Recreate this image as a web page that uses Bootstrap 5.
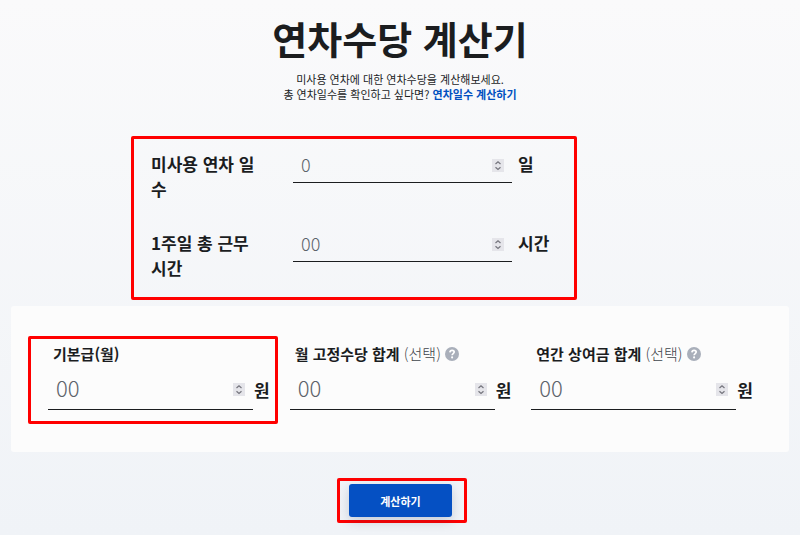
<!DOCTYPE html>
<html lang="ko">
<head>
<meta charset="utf-8">
<meta name="viewport" content="width=device-width, initial-scale=1">
<title>연차수당 계산기</title>
<link href="https://cdn.jsdelivr.net/npm/bootstrap@5.3.0/dist/css/bootstrap.min.css" rel="stylesheet">
<style>
  body {
    font-family: "Noto Sans CJK KR", "Noto Sans", sans-serif;
    color: #1b1d1f;
    background: linear-gradient(#fafafb, #f0f3f7) no-repeat;
  }
  .page-title { font-size: 38px; line-height: 48px; font-weight: 700; padding-top: 14px; }
  .intro { font-size: 11px; line-height: 15px; margin-top: 10px; }
  .intro a { color: #0050c0; font-weight: 700; }
  .marked { border: 3px solid transparent; border-radius: 2px; }
  .marked.on { border-color: #f00; }
  .work-wrap { max-width: 538px; margin-top: 34px; }
  .work-box { max-width: 446px; padding: 12px 20px 17px 17px; }
  .work-row + .work-row { margin-top: 29px; }
  .work-label { width: 118px; margin-right: 24px; font-size: 17px; line-height: 25px; font-weight: 700; }
  .unit { font-size: 17px; line-height: 25px; font-weight: 700; }
  .work-unit { width: 36px; margin-left: 6px; }
  .line-field { border-bottom: 1px solid #1b1d1f; padding: 0 8px; height: 32px; }
  .line-field input {
    appearance: textfield; -moz-appearance: textfield;
    background: transparent; border: 0; outline: 0; padding: 0; min-width: 0;
    font-size: 18px; line-height: 26px; font-weight: 300; color: #1b1d1f;
  }
  .line-field input::-webkit-inner-spin-button { appearance: none; -webkit-appearance: none; margin: 0; }
  .line-field input::placeholder { color: #5c636a; opacity: 1; }
  .stepper { width: 12px; height: 13px; background: #e5e5ea; }
  .pay-card { background: #fcfcfc; border-radius: 3px; margin: 6px 11px 0; padding: 30px 36px 28px 17px; }
  .pay-box { margin-right: -8px; padding: 4px 5px 11px 17px; }
  .pay-label { font-size: 15px; line-height: 22px; font-weight: 700; margin-left: 5px; }
  .pay-label small { font-size: 15px; font-weight: 300; color: #3f454b; }
  .pay-box .line-field { height: 45px; }
  .pay-box .line-field input { font-size: 22px; line-height: 32px; }
  .pay-box .unit { margin-left: 1px; }
  .help { width: 14px; height: 14px; }
  .submit-box { width: 130px; padding: 3px 12px 3px 9px; }
  .submit-wrap { margin: 26px 0 12px; }
  .btn-calc {
    height: 33px; font-size: 11px; line-height: 16px; font-weight: 700; color: #fff;
    background: #0550c3; border: 0; border-radius: 3px; box-shadow: 0 4px 12px rgba(30, 50, 90, .2);
  }
  .btn-calc:hover { background: #0446ab; color: #fff; }
</style>
<script src="https://cdn.jsdelivr.net/npm/bootstrap@5.3.0/dist/js/bootstrap.bundle.min.js"></script>
</head>
<body class="min-vh-100">
<svg class="d-none" aria-hidden="true">
  <symbol id="updown" viewBox="0 0 12 13"><path d="M3.500 5 6 2.700 8.500 5M3.500 8.200 6 10.500 8.500 8.200" fill="none" stroke="#75757d" stroke-width="1.200"/></symbol>
  <symbol id="question" viewBox="0 0 14 14"><circle cx="7" cy="7" r="7" fill="#a9afba"/><path d="M4.900 5.400C5 3.900 6 3.300 7.100 3.300c1.200 0 2.100.7 2.100 1.800 0 1.500-2.100 1.500-2.100 3.200" fill="none" stroke="#fff" stroke-width="1.700"/><circle cx="7.100" cy="10.400" r="1.050" fill="#fff"/></symbol>
</svg>
<main>
  <header class="text-center">
    <h1 class="page-title mb-0">연차수당 계산기</h1>
    <p class="intro mb-0">미사용 연차에 대한 연차수당을 계산해보세요.<br>총 연차일수를 확인하고 싶다면? <a href="#" class="text-decoration-none">연차일수 계산하기</a></p>
  </header>
  <form>
    <div class="work-wrap mx-auto">
      <div class="work-box marked on">
        <div class="work-row d-flex align-items-start">
          <label class="work-label flex-shrink-0" for="days">미사용 연차 일<wbr>수</label>
          <div class="line-field d-flex align-items-start flex-fill">
            <input class="flex-fill w-100" type="number" id="days" placeholder="0">
            <button type="button" class="stepper btn p-0 border-0 rounded-0 d-flex flex-shrink-0 mt-2" aria-label="일수 조절"><svg width="12" height="13"><use href="#updown"/></svg></button>
          </div>
          <span class="unit work-unit flex-shrink-0">일</span>
        </div>
        <div class="work-row d-flex align-items-start">
          <label class="work-label flex-shrink-0" for="hours">1주일 총 근무<br>시간</label>
          <div class="line-field d-flex align-items-start flex-fill">
            <input class="flex-fill w-100" type="number" id="hours" placeholder="00">
            <button type="button" class="stepper btn p-0 border-0 rounded-0 d-flex flex-shrink-0 mt-2" aria-label="시간 조절"><svg width="12" height="13"><use href="#updown"/></svg></button>
          </div>
          <span class="unit work-unit flex-shrink-0 text-nowrap">시간</span>
        </div>
      </div>
    </div>
    <section class="pay-card">
      <div class="row g-0">
        <div class="col-4">
          <div class="pay-box marked on">
            <div class="pay-label"><label for="base">기본급(월)</label></div>
            <div class="d-flex align-items-center">
              <div class="line-field d-flex align-items-center flex-fill">
                <input class="flex-fill w-100" type="number" id="base" placeholder="00">
                <button type="button" class="stepper btn p-0 border-0 rounded-0 d-flex flex-shrink-0 mt-1" aria-label="기본급 조절"><svg width="12" height="13"><use href="#updown"/></svg></button>
              </div>
              <span class="unit pt-1">원</span>
            </div>
          </div>
        </div>
        <div class="col-4">
          <div class="pay-box marked">
            <div class="pay-label d-flex align-items-center"><label for="fixed">월 고정수당 합계 <small>(선택)</small></label>
              <button type="button" class="help btn p-0 border-0 d-flex ms-1" aria-label="고정수당 도움말"><svg width="14" height="14"><use href="#question"/></svg></button></div>
            <div class="d-flex align-items-center">
              <div class="line-field d-flex align-items-center flex-fill">
                <input class="flex-fill w-100" type="number" id="fixed" placeholder="00">
                <button type="button" class="stepper btn p-0 border-0 rounded-0 d-flex flex-shrink-0 mt-1" aria-label="고정수당 조절"><svg width="12" height="13"><use href="#updown"/></svg></button>
              </div>
              <span class="unit pt-1">원</span>
            </div>
          </div>
        </div>
        <div class="col-4">
          <div class="pay-box marked">
            <div class="pay-label d-flex align-items-center"><label for="bonus">연간 상여금 합계 <small>(선택)</small></label>
              <button type="button" class="help btn p-0 border-0 d-flex ms-1" aria-label="상여금 도움말"><svg width="14" height="14"><use href="#question"/></svg></button></div>
            <div class="d-flex align-items-center">
              <div class="line-field d-flex align-items-center flex-fill">
                <input class="flex-fill w-100" type="number" id="bonus" placeholder="00">
                <button type="button" class="stepper btn p-0 border-0 rounded-0 d-flex flex-shrink-0 mt-1" aria-label="상여금 조절"><svg width="12" height="13"><use href="#updown"/></svg></button>
              </div>
              <span class="unit pt-1">원</span>
            </div>
          </div>
        </div>
      </div>
    </section>
    <div class="submit-wrap d-flex justify-content-center ps-1">
      <div class="submit-box marked on"><button type="button" class="btn btn-calc d-block w-100 py-0">계산하기</button></div>
    </div>
  </form>
</main>
</body>
</html>
